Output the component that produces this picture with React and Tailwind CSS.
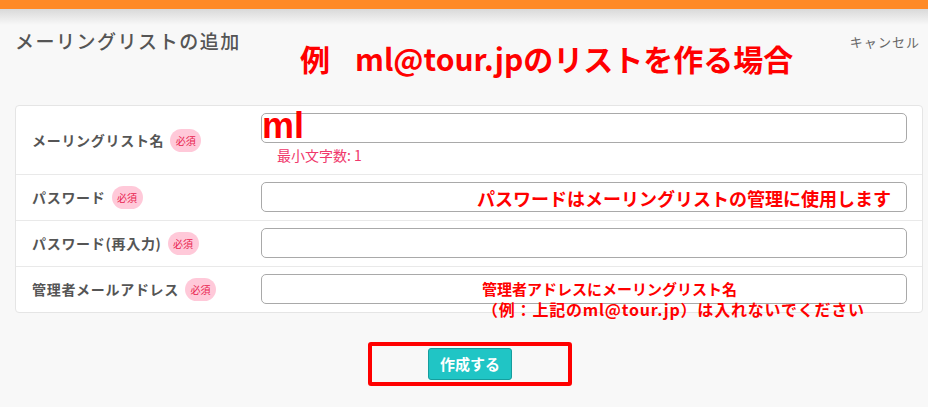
import React from "react";

const fields = [
  { label: "メーリングリスト名", hint: "最小文字数: 1", tall: true },
  { label: "パスワード" },
  { label: "パスワード(再入力)" },
  { label: "管理者メールアドレス" },
];

function Badge() {
  return (
    <span className="ml-[6px] inline-flex h-[23px] w-[31px] items-center justify-center rounded-full bg-[#ffc9d9] text-[10px] font-normal tracking-normal text-[#e8244f]">
      必須
    </span>
  );
}

function Row({ field, last }) {
  const h = field.tall ? "h-[69px] " : last ? "h-[45px] " : "h-[46px] ";
  return (
    <div className={"flex items-center pl-[16px] pr-[15px] " + h + (last ? "" : "border-b border-[#e9e9e9]")}>
      <div className="flex w-[229px] items-center text-[14px] font-semibold tracking-[0.05em] text-[#555]">
        {field.label}
        <Badge />
      </div>
      <div className="flex-1 self-start pt-[7px]">
        <input className="block h-[30px] w-full rounded-[5px] border border-[#a9a9a9] bg-white px-2 text-sm outline-none" />
        {field.hint && (
          <div className="mt-[4px] pl-[16px] text-[14px] leading-[17px] text-[#f0386c]">{field.hint}</div>
        )}
      </div>
    </div>
  );
}

export default function App() {
  return (
    <div
      className="relative h-[407px] w-[928px] overflow-hidden bg-[#f8f8f8]"
      style={{ fontFamily: '"Noto Sans CJK JP", "Noto Sans", sans-serif' }}
    >
      <div className="h-[9px] bg-[#ff8a26]" />
      <div className="h-[16px] bg-gradient-to-b from-[#d9d9d9] to-[#f8f8f8]" />

      <div className="flex items-start justify-between pl-[15px] pr-[8px] pt-[2px]">
        <h1 className="text-[19px] font-medium leading-[28px] tracking-[0.08em] text-[#555]">
          メーリングリストの追加
        </h1>
        <span className="pt-[5px] text-[13px] tracking-[0.08em] text-[#666]">キャンセル</span>
      </div>

      <div className="mx-[15px] mt-[50px] w-[908px] rounded-[4px] border border-[#e5e5e5] bg-white">
        {fields.map((f, i) => (
          <Row key={f.label} field={f} last={i === fields.length - 1} />
        ))}
      </div>

      <div className="mt-[29px] flex justify-center pl-[12px]">
        <div className="flex h-[44px] w-[204px] items-center justify-center rounded-[3px] border-[4px] border-[#ff0000]">
          <button className="h-[32px] w-[84px] rounded-[3px] border border-[#169d9d] bg-[#20c5c5] text-[15px] font-bold text-white">
            作成する
          </button>
        </div>
      </div>

      {/* red annotations drawn over the form */}
      <div className="absolute left-[300px] top-[38px] flex whitespace-pre text-[30px] font-bold leading-[40px] text-[#ff0000]">
        <span>例</span>
        <span className="ml-[25px]">ml@tour.jpのリストを作る場合</span>
      </div>
      <div
        className="absolute left-[262px] top-[105px] text-[36px] font-bold leading-[42px] text-[#ff0000]"
        style={{ fontFamily: '"Liberation Sans", sans-serif' }}
      >
        ml
      </div>
      <div className="absolute left-[477px] top-[185px] text-[18px] font-bold leading-[26px] text-[#ff0000]">
        パスワードはメーリングリストの管理に使用します
      </div>
      <div className="absolute left-[482px] top-[278px] font-bold text-[#ff0000]">
        <div className="text-[15px] leading-[21px]">管理者アドレスにメーリングリスト名</div>
        <div className="text-[16px] leading-[21px] tracking-[0.05em]">（例：上記のml@tour.jp）は入れないでください</div>
      </div>
    </div>
  );
}
